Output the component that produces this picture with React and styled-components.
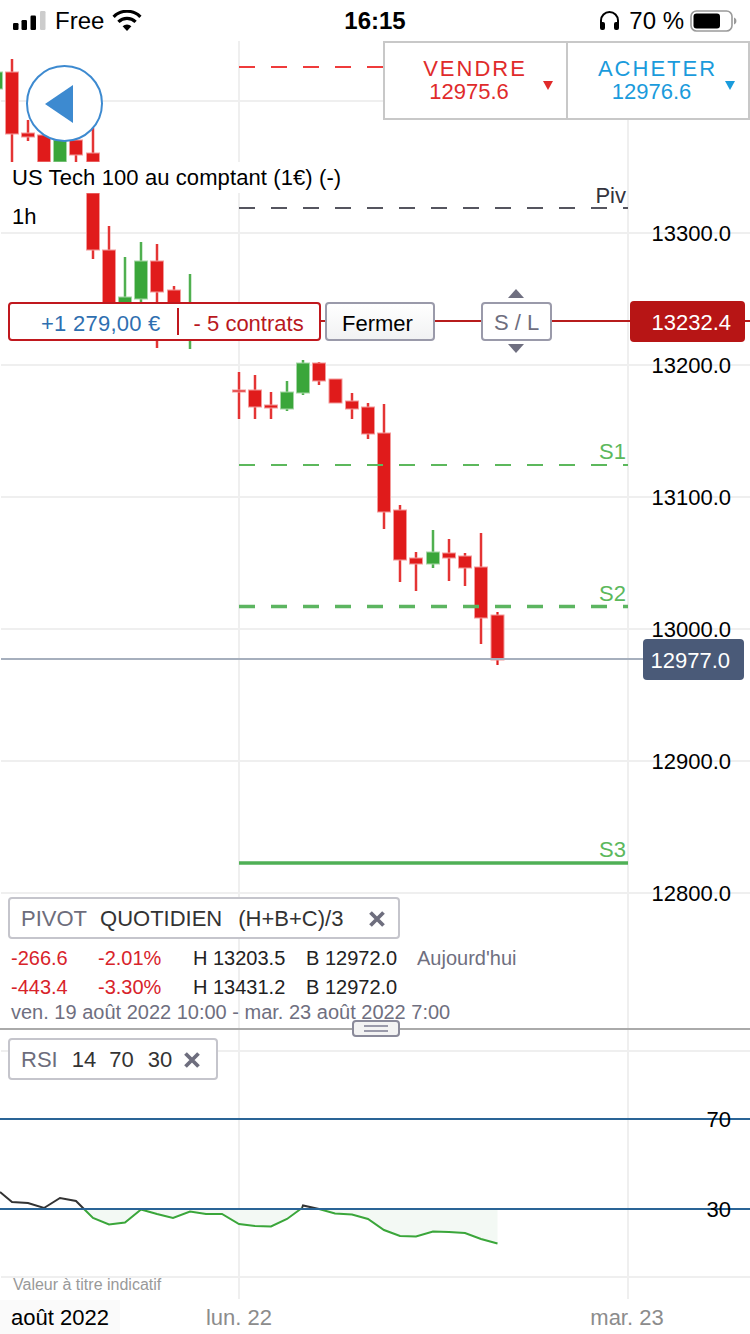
import React from 'react'
import styled, { createGlobalStyle } from 'styled-components'

const FONT = '"Liberation Sans", Arial, sans-serif'
const PANEL_TOP = 41
const RED = '#e01b1b'
const GREEN = '#3aa63a'

const GlobalStyle = createGlobalStyle`
  html, body {
    margin: 0;
    padding: 0;
    background: #fff;
    overflow: hidden;
  }
  body {
    font-family: ${FONT};
    color: #000;
  }
`

const Page = styled.div`
  width: 750px;
  height: 1334px;
  display: flex;
  flex-direction: column;
  background: #fff;
  overflow: hidden;
`

const StatusBar = styled.div`
  height: 41px;
  flex: none;
  display: grid;
  grid-template-columns: 1fr auto 1fr;
  align-items: center;
  font-size: 24px;
  padding: 0 13px 0 13px;
`

const StatusLeft = styled.div`
  display: flex;
  align-items: center;
  gap: 8px;
`

const StatusRight = styled.div`
  display: flex;
  align-items: center;
  justify-content: flex-end;
  gap: 6px;
`

const Clock = styled.div`
  font-weight: 700;
  font-size: 24px;
`

const ChartPanel = styled.div`
  position: relative;
  height: 987px;
  flex: none;
  display: flex;
  flex-direction: column;
`

const Drawing = styled.svg`
  position: absolute;
  left: 0;
  top: 0;
  display: block;
`

const TitleBar = styled.div`
  position: relative;
  margin-top: 121px;
  width: 345px;
  height: 31px;
  padding-left: 12px;
  box-sizing: border-box;
  background: #fff;
  font-size: 22px;
  line-height: 31px;
  letter-spacing: 0.1px;
  white-space: nowrap;
`

const Interval = styled.div`
  position: relative;
  width: 40px;
  height: 39px;
  padding-left: 12px;
  box-sizing: border-box;
  background: #fff;
  font-size: 22px;
  line-height: 48px;
`

const BackButton = styled.div`
  position: absolute;
  left: 26px;
  top: 24px;
  width: 77px;
  height: 77px;
  box-sizing: border-box;
  border: 2px solid #3d8ad0;
  border-radius: 50%;
  background: #fff;
  display: flex;
  align-items: center;
  justify-content: center;
  padding-right: 11px;
`

const TradeBox = styled.div`
  position: absolute;
  right: 0;
  top: 0;
  width: 367px;
  height: 79px;
  box-sizing: border-box;
  border: 2px solid #c8c8c8;
  background: #fff;
  display: grid;
  grid-template-columns: 181px 1fr;
`

const TradeSide = styled.div`
  position: relative;
  color: ${p => p.$color};
  text-align: center;
  padding-top: 14px;
  padding-right: 13px;
  border-left: ${p => (p.$divider ? '2px solid #c8c8c8' : 'none')};
`

const TradeName = styled.div`
  font-size: 22px;
  line-height: 24px;
  letter-spacing: 2px;
  margin-left: 12px;
`

const TradePrice = styled.div`
  font-size: 22px;
  line-height: 22px;
`

const TradeArrow = styled.div`
  position: absolute;
  right: 13px;
  top: 38px;
  width: 0;
  height: 0;
  border-left: 5px solid transparent;
  border-right: 5px solid transparent;
  border-top: 9px solid ${p => p.$color};
`

const PositionRow = styled.div`
  position: absolute;
  left: 8px;
  right: 5px;
  top: 260px;
  display: flex;
  align-items: center;
  height: 41px;
`

const PositionBox = styled.div`
  width: 313px;
  height: 39px;
  box-sizing: border-box;
  border: 2px solid #c0181e;
  border-radius: 4px;
  background: #fff;
  display: flex;
  align-items: center;
  font-size: 22px;
  white-space: nowrap;
`

const Profit = styled.span`
  color: #2f6fb0;
  margin-left: 31px;
  letter-spacing: 0.25px;
  padding-top: 4px;
`

const PositionSeparator = styled.span`
  width: 2px;
  height: 27px;
  background: #c0181e;
  margin: 0 15px 0 16px;
`

const Contracts = styled.span`
  color: #b9181e;
  padding-top: 4px;
`

const CloseButton = styled.div`
  width: 110px;
  height: 39px;
  margin-left: 4px;
  box-sizing: border-box;
  border: 2px solid #9a9aaa;
  border-radius: 4px;
  background: linear-gradient(#ffffff, #f1f2f3);
  display: flex;
  align-items: center;
  justify-content: center;
  font-size: 22px;
  padding: 4px 5px 0 0;
`

const StopHandle = styled.div`
  position: relative;
  width: 71px;
  height: 39px;
  margin-left: 46px;
  box-sizing: border-box;
  border: 2px solid #9a9aaa;
  border-radius: 4px;
  background: #fff;
  color: #6e6e7e;
  display: flex;
  align-items: center;
  justify-content: center;
  font-size: 22px;
  padding-top: 2px;
`

const HandleArrow = styled.div`
  position: absolute;
  left: 25px;
  ${p => (p.$up ? 'top: -15px;' : 'bottom: -14px;')}
  width: 0;
  height: 0;
  border-left: 8px solid transparent;
  border-right: 8px solid transparent;
  ${p => (p.$up ? 'border-bottom' : 'border-top')}: 9px solid #6f6f80;
`

const PriceTag = styled.div`
  width: ${p => p.$width}px;
  height: 41px;
  box-sizing: border-box;
  border-radius: 4px;
  background: ${p => p.$bg};
  color: #fff;
  font-size: 22px;
  display: flex;
  align-items: center;
  justify-content: flex-end;
  padding: 2px 14px 0 0;
`

const CurrentPrice = styled(PriceTag)`
  position: absolute;
  right: 6px;
  top: ${p => p.$y - PANEL_TOP}px;
`

const TagSlot = styled.div`
  margin-left: auto;
`

const AxisValue = styled.div`
  position: absolute;
  right: 19px;
  top: ${p => p.$y - PANEL_TOP + 1}px;
  transform: translateY(-50%);
  font-size: 22px;
  line-height: 26px;
`

const LevelLabel = styled.div`
  position: absolute;
  right: 124px;
  top: ${p => p.$y - PANEL_TOP + 1}px;
  transform: translateY(-50%);
  font-size: 22px;
  line-height: 26px;
  color: ${p => p.$color};
`

const Legend = styled.div`
  position: relative;
  margin-top: auto;
  margin-left: 8px;
  display: flex;
  flex-direction: column;
  padding-bottom: 6px;
`

const LegendBox = styled.div`
  align-self: flex-start;
  width: ${p => p.$width}px;
  height: 42px;
  box-sizing: border-box;
  border: 2px solid #c5c5cc;
  border-radius: 4px;
  background: #fff;
  display: flex;
  align-items: center;
  padding: 1px 0 0 11px;
  font-size: 22px;
  color: #333;
  white-space: nowrap;
`

const LegendName = styled.span`
  color: #6d6d7c;
`

const LegendValue = styled.span`
  margin-left: ${p => p.$gap}px;
`

const CloseIcon = styled.svg`
  margin-left: ${p => p.$gap}px;
  flex: none;
`

const StatsGrid = styled.div`
  display: grid;
  grid-template-columns: 87px 95px 113px 111px auto;
  grid-auto-rows: 29px;
  align-items: center;
  margin-top: 5px;
  margin-left: 3px;
  font-size: 20px;
  color: #222;
  white-space: nowrap;
`

const Loss = styled.span`
  color: #d8232a;
`

const Muted = styled.span`
  color: #6f6f80;
`

const DateRange = styled.div`
  margin-left: 3px;
  font-size: 20px;
  line-height: 20px;
  color: #6f6f80;
  white-space: nowrap;
`

const Divider = styled.div`
  position: relative;
  flex: none;
  height: 2px;
  background: #aaa;
`

const DragHandle = styled.div`
  position: absolute;
  left: 352px;
  top: -8px;
  width: 48px;
  height: 17px;
  box-sizing: border-box;
  border: 2px solid #8a8a9a;
  border-radius: 4px;
  background: #f3f3f3;
  display: flex;
  flex-direction: column;
  align-items: center;
  justify-content: center;
  gap: 3px;
`

const DragGrip = styled.span`
  width: 24px;
  height: 2px;
  background: #9a9aaa;
`

const RsiPanel = styled.div`
  position: relative;
  height: 270px;
  flex: none;
  display: flex;
  flex-direction: column;
  justify-content: space-between;
`

const RsiLegend = styled.div`
  position: relative;
  margin: 8px 0 0 8px;
`

const RsiValue = styled.div`
  position: absolute;
  right: 19px;
  top: ${p => p.$y - 1029}px;
  transform: translateY(-50%);
  font-size: 22px;
  line-height: 26px;
`

const Disclaimer = styled.div`
  position: relative;
  margin: 0 0 6px 13px;
  font-size: 16px;
  line-height: 18px;
  color: #999;
`

const TimeAxis = styled.div`
  position: relative;
  flex: 1;
  font-size: 22px;
  color: #8c8c8c;
`

const MonthLabel = styled.div`
  width: 120px;
  height: 100%;
  padding-left: 11px;
  box-sizing: border-box;
  background: #fafafa;
  color: #000;
  line-height: 36px;
`

const TimeTick = styled.div`
  position: absolute;
  left: ${p => p.$x}px;
  top: 0;
  transform: translateX(-50%);
  line-height: 36px;
  white-space: nowrap;
`

// x, top of wick, bottom of wick, top of body, bottom of body, colour
const leftCandles = [
  [-4, 60, 162, 72, 89, 'g'],
  [12, 59, 162, 72, 134, 'r'],
  [28, 120, 141, 133, 137, 'r'],
  [44, 120, 162, 135, 162, 'r'],
  [60, 130, 162, 140, 162, 'g'],
  [76, 130, 162, 140, 155, 'r'],
  [93, 128, 162, 153, 162, 'r'],
  [93, 193, 259, 193, 250, 'r'],
  [109, 226, 310, 250, 310, 'r'],
  [125, 257, 310, 297, 310, 'g'],
  [141, 242, 304, 261, 299, 'g'],
  [157, 244, 348, 261, 292, 'r'],
  [174, 286, 310, 290, 310, 'r'],
  [190, 274, 349, 310, 310, 'g']
]

const rightCandles = [
  [239, 372, 419, 390, 392, 'r'],
  [255, 375, 419, 390, 407, 'r'],
  [271, 392, 419, 405, 408, 'r'],
  [287, 381, 411, 392, 409, 'g'],
  [303, 360, 395, 363, 393, 'g'],
  [319, 362, 385, 363, 381, 'r'],
  [335.5, 379, 403, 379, 403, 'r'],
  [352, 393, 419, 401, 409, 'r'],
  [368, 403, 439, 407, 434, 'r'],
  [384, 404, 529, 433, 512, 'r'],
  [400, 505, 582, 510, 560, 'r'],
  [416, 552, 591, 558, 564, 'r'],
  [433, 530, 568, 552, 564, 'g'],
  [449, 539, 581, 553, 558, 'r'],
  [465, 553, 586, 556, 568, 'r'],
  [481, 533, 644, 567, 618, 'r'],
  [497.5, 612, 665, 615, 660, 'r']
]

const mainGrid = [101, 233, 365, 497, 629, 761, 893]
const axisValues = [
  [233, '13300.0'],
  [365, '13200.0'],
  [497, '13100.0'],
  [629, '13000.0'],
  [761, '12900.0'],
  [893, '12800.0']
]

const rsiBlack = [[0, 1192], [12, 1202], [28, 1203], [44, 1208], [60, 1198], [76, 1201], [84, 1209]]
const rsiBlack2 = [[302, 1208], [303, 1205.5], [319, 1209]]
const rsiGreen1 = [[84, 1209], [93, 1218], [109, 1224.5], [125, 1222.5], [141, 1209.5]]
const rsiGreen2 = [[141, 1209.5], [157, 1214], [173, 1218], [190, 1211.5], [206, 1214], [222, 1214], [239, 1224], [255, 1226], [271, 1226.5], [287, 1219], [302, 1208]]
const rsiGreen3 = [[319, 1209], [335, 1213.5], [352, 1214.5], [368, 1219], [384, 1230], [400, 1236], [416, 1236.5], [433, 1231.5], [449, 1232], [465, 1233], [481, 1239], [497.5, 1243.5]]

const toPoints = pts => pts.map(p => p.join(',')).join(' ')

function Candle({ data }) {
  const [x, wickTop, wickBottom, bodyTop, bodyBottom, kind] = data
  const fill = kind === 'r' ? RED : GREEN
  const edge = kind === 'r' ? '#f39a9a' : '#a5d6a5'
  return (
    <g>
      <line x1={x} x2={x} y1={wickTop} y2={wickBottom} stroke={edge} strokeWidth="3" />
      <line x1={x} x2={x} y1={wickTop} y2={wickBottom} stroke={fill} strokeWidth="1.6" />
      {bodyBottom > bodyTop && (
        <rect x={x - 6.5} y={bodyTop} width="13" height={bodyBottom - bodyTop} fill={fill} stroke={edge} strokeWidth="1" />
      )}
    </g>
  )
}

function MainChart() {
  return (
    <Drawing width="750" height="987" viewBox={`0 ${PANEL_TOP} 750 987`}>
      {mainGrid.map(y => (
        <line key={y} x1="1" x2="750" y1={y} y2={y} stroke="#efefef" strokeWidth="2" />
      ))}
      <line x1="239" x2="239" y1="41" y2="1028" stroke="#efefef" strokeWidth="2" />
      <line x1="628" x2="628" y1="41" y2="1028" stroke="#efefef" strokeWidth="2" />

      <line x1="239" x2="383" y1="67" y2="67" stroke="#ef3b3b" strokeWidth="2" strokeDasharray="16 16" />
      <line x1="239" x2="628" y1="208" y2="208" stroke="#55555f" strokeWidth="2" strokeDasharray="16 16" />

      {leftCandles.map((c, i) => <Candle key={i} data={c} />)}
      {rightCandles.map((c, i) => <Candle key={i} data={c} />)}

      <line x1="239" x2="628" y1="465" y2="465" stroke="#5cb85c" strokeWidth="2" strokeDasharray="16 16" />
      <line x1="239" x2="628" y1="606.5" y2="606.5" stroke="#5cb560" strokeWidth="3.5" strokeDasharray="16 16" />
      <line x1="239" x2="628" y1="863" y2="863" stroke="#4fb056" strokeWidth="3.5" />
      <line x1="320" x2="750" y1="321" y2="321" stroke="#b71c1c" strokeWidth="2" />
      <line x1="1" x2="645" y1="659" y2="659" stroke="#a6afbd" strokeWidth="2" />
    </Drawing>
  )
}

function RsiChart() {
  return (
    <Drawing width="750" height="270" viewBox="0 1030 750 270">
      <line x1="1" x2="750" y1="1051" y2="1051" stroke="#efefef" strokeWidth="2" />
      <line x1="1" x2="750" y1="1277" y2="1277" stroke="#efefef" strokeWidth="2" />
      <line x1="239" x2="239" y1="1030" y2="1299" stroke="#efefef" strokeWidth="2" />
      <line x1="628" x2="628" y1="1030" y2="1299" stroke="#efefef" strokeWidth="2" />

      <polygon points={toPoints(rsiGreen1)} fill="#f3f9f4" />
      <polygon points={toPoints(rsiGreen2)} fill="#f3f9f4" />
      <polygon points={toPoints([[319, 1209], ...rsiGreen3, [497.5, 1209]])} fill="#f3f9f4" />

      <polyline points={toPoints(rsiBlack)} fill="none" stroke="#333" strokeWidth="2" />
      <polyline points={toPoints(rsiBlack2)} fill="none" stroke="#333" strokeWidth="2" />
      <polyline points={toPoints(rsiGreen1)} fill="none" stroke="#3aa63a" strokeWidth="2" />
      <polyline points={toPoints(rsiGreen2)} fill="none" stroke="#3aa63a" strokeWidth="2" />
      <polyline points={toPoints(rsiGreen3)} fill="none" stroke="#3aa63a" strokeWidth="2" />

      <line x1="0" x2="750" y1="1119" y2="1119" stroke="#2a6496" strokeWidth="2" />
      <line x1="0" x2="750" y1="1209" y2="1209" stroke="#2a6496" strokeWidth="2" />
    </Drawing>
  )
}

const SignalIcon = () => (
  <svg width="34" height="22" viewBox="0 0 34 22">
    <rect x="0" y="13" width="5.5" height="7" rx="1.2" fill="#000" />
    <rect x="8.5" y="10" width="5.5" height="10" rx="1.2" fill="#000" />
    <rect x="17.5" y="5.5" width="5.5" height="14.5" rx="1.2" fill="#000" />
    <rect x="27" y="1" width="5.5" height="19" rx="1.2" fill="#ccc" />
  </svg>
)

const WifiIcon = () => (
  <svg width="30" height="22" viewBox="0 0 30 22">
    <path d="M15 21 L10.6 16.2 A6.4 6.4 0 0 1 19.4 16.2 Z" fill="#000" />
    <path d="M6.4 11.9 A12.2 12.2 0 0 1 23.6 11.9" fill="none" stroke="#000" strokeWidth="3.2" />
    <path d="M1.6 6.8 A19 19 0 0 1 28.4 6.8" fill="none" stroke="#000" strokeWidth="3.2" />
  </svg>
)

const HeadphonesIcon = () => (
  <svg width="24" height="21" viewBox="0 0 24 21">
    <path d="M2 15 V10.5 A8.5 8.5 0 0 1 19 10.5 V15" fill="none" stroke="#000" strokeWidth="2" />
    <rect x="1" y="12" width="5" height="8" rx="2" fill="#000" />
    <rect x="15" y="12" width="5" height="8" rx="2" fill="#000" />
  </svg>
)

const BatteryIcon = () => (
  <svg width="47" height="22" viewBox="0 0 47 22">
    <rect x="1" y="1" width="41" height="20" rx="5.5" fill="none" stroke="#9a9a9a" strokeWidth="1.6" />
    <rect x="3.5" y="3.5" width="26.5" height="15" rx="3" fill="#000" />
    <path d="M44 7.5 C46 8.2 46.4 9.5 46.4 11 C46.4 12.5 46 13.8 44 14.5 Z" fill="#9a9a9a" />
  </svg>
)

const BackArrow = () => (
  <svg width="30" height="40" viewBox="0 0 30 40">
    <polygon points="1,20 29,1 29,39" fill="#3d8ad0" />
  </svg>
)

const Cross = ({ gap }) => (
  <CloseIcon $gap={gap} width="18" height="18" viewBox="0 0 18 18">
    <path d="M2.5 2.5 L15.5 15.5 M15.5 2.5 L2.5 15.5" stroke="#6e6e7e" strokeWidth="3.8" fill="none" />
  </CloseIcon>
)

export default function App() {
  return (
    <Page>
      <GlobalStyle />
      <StatusBar>
        <StatusLeft>
          <SignalIcon />
          <span>Free</span>
          <WifiIcon />
        </StatusLeft>
        <Clock>16:15</Clock>
        <StatusRight>
          <HeadphonesIcon />
          <span>70 %</span>
          <BatteryIcon />
        </StatusRight>
      </StatusBar>

      <ChartPanel>
        <MainChart />
        <TitleBar>US Tech 100 au comptant (1€) (-)</TitleBar>
        <Interval>1h</Interval>
        <BackButton>
          <BackArrow />
        </BackButton>
        <TradeBox>
          <TradeSide $color="#e02b2b">
            <TradeName>VENDRE</TradeName>
            <TradePrice>12975.6</TradePrice>
            <TradeArrow $color="#e02b2b" />
          </TradeSide>
          <TradeSide $color="#1a9bdc" $divider>
            <TradeName>ACHETER</TradeName>
            <TradePrice>12976.6</TradePrice>
            <TradeArrow $color="#1a9bdc" />
          </TradeSide>
        </TradeBox>
        <LevelLabel $y={195} $color="#33333d">Piv</LevelLabel>
        <LevelLabel $y={451} $color="#5cb85c">S1</LevelLabel>
        <LevelLabel $y={593} $color="#5cb85c">S2</LevelLabel>
        <LevelLabel $y={849} $color="#5cb85c">S3</LevelLabel>
        {axisValues.map(([y, label]) => (
          <AxisValue key={y} $y={y}>{label}</AxisValue>
        ))}
        <PositionRow>
          <PositionBox>
            <Profit>+1 279,00 €</Profit>
            <PositionSeparator />
            <Contracts>- 5 contrats</Contracts>
          </PositionBox>
          <CloseButton>Fermer</CloseButton>
          <StopHandle>
            <HandleArrow $up />
            S / L
            <HandleArrow />
          </StopHandle>
          <TagSlot>
            <PriceTag $width={115} $bg="#b71515">13232.4</PriceTag>
          </TagSlot>
        </PositionRow>
        <CurrentPrice $width={101} $bg="#4a5a78" $y={639}>12977.0</CurrentPrice>
        <Legend>
          <LegendBox $width={392}>
            <LegendName>PIVOT</LegendName>
            <LegendValue $gap={13}>QUOTIDIEN</LegendValue>
            <LegendValue $gap={16}>(H+B+C)/3</LegendValue>
            <Cross gap={25} />
          </LegendBox>
          <StatsGrid>
            <Loss>-266.6</Loss>
            <Loss>-2.01%</Loss>
            <span>H 13203.5</span>
            <span>B 12972.0</span>
            <Muted>Aujourd'hui</Muted>
            <Loss>-443.4</Loss>
            <Loss>-3.30%</Loss>
            <span>H 13431.2</span>
            <span>B 12972.0</span>
          </StatsGrid>
          <DateRange>ven. 19 août 2022 10:00 - mar. 23 août 2022 7:00</DateRange>
        </Legend>
      </ChartPanel>

      <Divider>
        <DragHandle>
          <DragGrip />
          <DragGrip />
        </DragHandle>
      </Divider>

      <RsiPanel>
        <RsiChart />
        <RsiLegend>
          <LegendBox $width={210}>
            <LegendName>RSI</LegendName>
            <LegendValue $gap={14}>14</LegendValue>
            <LegendValue $gap={13}>70</LegendValue>
            <LegendValue $gap={14}>30</LegendValue>
            <Cross gap={11} />
          </LegendBox>
        </RsiLegend>
        <RsiValue $y={1119}>70</RsiValue>
        <RsiValue $y={1209}>30</RsiValue>
        <Disclaimer>Valeur à titre indicatif</Disclaimer>
      </RsiPanel>

      <TimeAxis>
        <MonthLabel>août 2022</MonthLabel>
        <TimeTick $x={239}>lun. 22</TimeTick>
        <TimeTick $x={627}>mar. 23</TimeTick>
      </TimeAxis>
    </Page>
  )
}
